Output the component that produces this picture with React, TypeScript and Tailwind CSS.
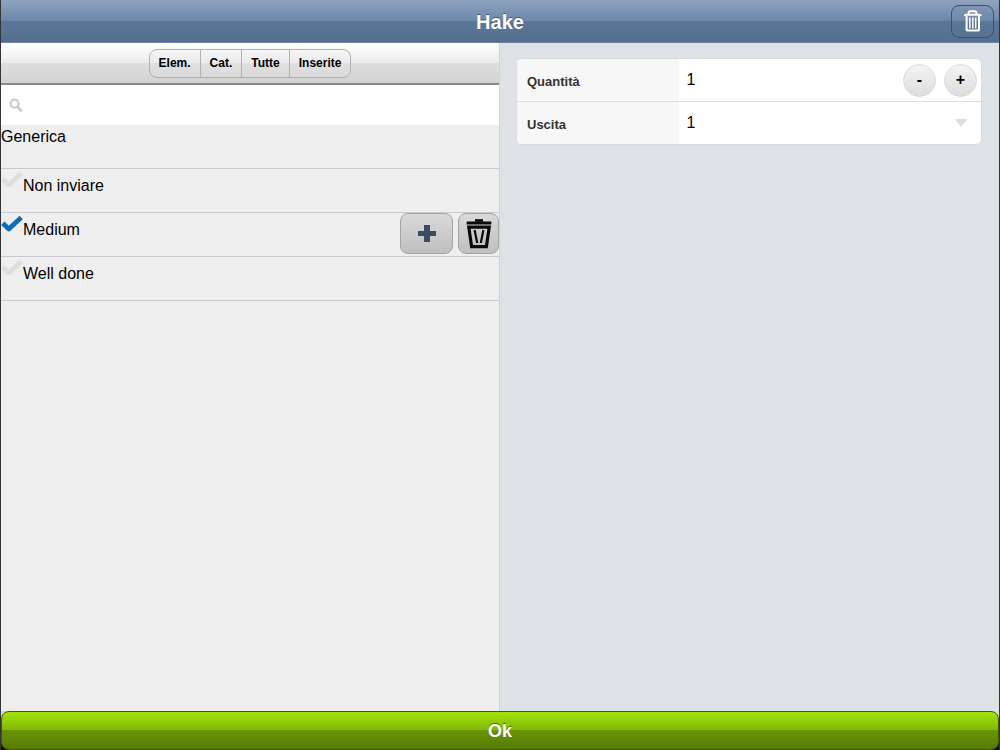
import React, { useState } from 'react';

const TABS = ['Elem.', 'Cat.', 'Tutte', 'Inserite'];
const VARIANTS = ['Non inviare', 'Medium', 'Well done'];

const CheckMark = ({ active }: { active: boolean }) => (
  <svg
    width="22"
    height="18"
    viewBox="0 0 22 18"
    className={`shrink-0 ${active ? 'text-[#0b6db7]' : 'text-[#dedede]'}`}
    aria-hidden="true"
  >
    <path d="M1.8 8.2L7.8 14L20.2 2.6" fill="none" stroke="currentColor" strokeWidth="4.8" strokeLinejoin="round" />
  </svg>
);

const HeaderTrashIcon = () => (
  <svg width="18" height="22" viewBox="0 0 18 22" fill="none" stroke="#fff" aria-hidden="true">
    <path d="M4.6 4.5V3Q4.6 1.2 6.4 1.2h4.2Q12.4 1.2 12.4 3V4.5" strokeWidth="2" />
    <path d="M0.8 6Q0.8 4.7 2.4 4.7h12.8Q16.8 4.7 16.8 6" strokeWidth="2" />
    <path d="M2.6 6v13.7Q2.6 20.6 3.5 20.6h10.6Q15 20.6 15 19.7V6" strokeWidth="2" />
    <path d="M5.9 7.4v11M8.8 7.4v11M11.7 7.4v11" strokeWidth="1.5" />
  </svg>
);

const RowTrashIcon = () => (
  <svg width="26" height="30" viewBox="0 0 26 30" fill="none" stroke="#0a0a0a" aria-hidden="true">
    <path d="M9 1.5h8" strokeWidth="2.6" />
    <path d="M0.7 4h24.6" strokeWidth="3" />
    <path d="M2.8 8.2h20.4L20.4 27.6H5.6Z" strokeWidth="3.2" />
    <path d="M8.6 11l2.6 13M17.4 11l-2.6 13" strokeWidth="2.2" />
  </svg>
);

const SearchIcon = () => (
  <svg width="14" height="15" viewBox="0 0 14 15" fill="none" stroke="#cbcbcb" aria-hidden="true">
    <circle cx="5.6" cy="5.6" r="4" strokeWidth="2.1" />
    <path d="M8.6 8.8l4.2 4.5" strokeWidth="2.6" />
  </svg>
);

const App = () => {
  const [selected, setSelected] = useState(['Medium']);
  const [quantity, setQuantity] = useState(1);

  const toggle = (name: string) => {
    setSelected(selected.includes(name) ? selected.filter((n) => n !== name) : [...selected, name]);
  };

  return (
    <div className="min-h-screen flex flex-col bg-[#dee1e6] border-x border-[#333539] font-['Liberation_Sans',Arial,sans-serif] text-black">
      {/* Title bar */}
      <header className="grid grid-cols-[1fr_auto_1fr] items-center h-[43px] px-[5px] border-b border-[#6c83a4] bg-[linear-gradient(to_bottom,#8fa3be_0%,#6c87a9_50%,#5a7799_50%,#566f8e_100%)]">
        <h1 className="col-start-2 text-xl leading-7 pt-px font-bold text-white [text-shadow:0_-1px_0_#43536b]">Hake</h1>
        <button
          aria-label="Elimina"
          className="justify-self-end flex items-center justify-center w-[43px] h-[33px] rounded-lg border border-[#3d516a] bg-[linear-gradient(to_bottom,#7f95b3_0%,#6f89aa_50%,#5a7799_50%,#59728f_100%)]"
        >
          <HeaderTrashIcon />
        </button>
      </header>

      <div className="flex flex-1">
        {/* Variants */}
        <section className="w-1/2 bg-[#eee] border-r border-[#d0d2d5]">
          <div className="flex justify-center items-center h-[42px] border-b-2 border-[#888] bg-[linear-gradient(to_bottom,#fff_0%,#ebebeb_50%,#dfdfdf_50%,#d2d2d2_100%)]">
            <div className="flex h-[29px] rounded-lg border border-[#b0b0b0] bg-[linear-gradient(to_bottom,#f4f4f4_0%,#ebebeb_50%,#e0e0e0_50%,#d9d9d9_100%)]">
              {TABS.map((tab) => (
                <button key={tab} className="px-[9px] text-xs font-bold border-r border-[#b0b0b0] last:border-r-0">
                  {tab}
                </button>
              ))}
            </div>
          </div>

          <label className="flex items-center gap-2 h-10 px-2 bg-white">
            <SearchIcon />
            <input type="search" aria-label="Cerca" className="flex-1 min-w-0 outline-none" />
          </label>

          <h2 className="h-11 border-b border-[#c8c9cf] text-base">Generica</h2>
          <ul>
            {VARIANTS.map((name) => (
              <li key={name} className="flex justify-between h-11 border-b border-[#c8c9cf]">
                <label className="relative flex flex-1 pt-0.5 text-base">
                  <input
                    type="checkbox"
                    className="sr-only"
                    checked={selected.includes(name)}
                    onChange={() => toggle(name)}
                  />
                  <CheckMark active={selected.includes(name)} />
                  <span className="pt-[3px]">{name}</span>
                </label>
                {selected.includes(name) && (
                  <div className="flex gap-[5px]">
                    <button
                      aria-label="Aggiungi"
                      className="flex items-center justify-center w-[53px] h-[41px] rounded-lg border border-[#a3a3a3] bg-linear-to-b from-[#d9d9d9] to-[#bfbfbf]"
                    >
                      <svg width="18" height="17" viewBox="0 0 18 17" aria-hidden="true">
                        <path d="M6 0h6v6h6v5h-6v6H6v-6H0V6h6Z" fill="#3a4b66" />
                      </svg>
                    </button>
                    <button
                      aria-label="Rimuovi"
                      className="flex items-center justify-center w-[41px] h-[41px] rounded-lg border border-[#a3a3a3] bg-linear-to-b from-[#d9d9d9] to-[#bfbfbf]"
                    >
                      <RowTrashIcon />
                    </button>
                  </div>
                )}
              </li>
            ))}
          </ul>
        </section>

        {/* Order details */}
        <section className="w-1/2 pt-[15px] pl-4 pr-[17px]">
          <div className="rounded-md border border-[#d9dbdf] bg-white overflow-hidden">
            <div className="flex h-[43px] border-b border-[#ddd]">
              <label htmlFor="quantity" className="w-[35%] bg-[#f7f7f7] px-2.5 pt-[13px] text-[13px] leading-5 font-bold text-[#333]">
                Quantità
              </label>
              <input
                id="quantity"
                inputMode="numeric"
                value={quantity}
                onChange={(e) => setQuantity(Number(e.target.value) || 0)}
                className="flex-1 min-w-0 px-[7px] text-base outline-none"
              />
              <div className="flex items-center gap-2 pr-1">
                <button
                  aria-label="Diminuisci"
                  onClick={() => setQuantity(Math.max(0, quantity - 1))}
                  className="size-[33px] rounded-full border border-[#d9d9d9] bg-linear-to-b from-[#f4f4f4] to-[#dcdcdc] text-base font-bold"
                >
                  -
                </button>
                <button
                  aria-label="Aumenta"
                  onClick={() => setQuantity(quantity + 1)}
                  className="size-[33px] rounded-full border border-[#d9d9d9] bg-linear-to-b from-[#f4f4f4] to-[#dcdcdc] text-base font-bold"
                >
                  +
                </button>
              </div>
            </div>
            <div className="relative flex h-[42px]">
              <label htmlFor="course" className="w-[35%] bg-[#f7f7f7] px-2.5 pt-[13px] text-[13px] leading-5 font-bold text-[#333]">
                Uscita
              </label>
              <select id="course" className="flex-1 min-w-0 px-[7px] text-base appearance-none bg-transparent outline-none">
                <option>1</option>
                <option>2</option>
                <option>3</option>
              </select>
              <svg
                width="12"
                height="8"
                viewBox="0 0 12 8"
                className="absolute right-3.5 top-[17px] pointer-events-none"
                aria-hidden="true"
              >
                <path d="M0 0h12L6 8Z" fill="#ddd" />
              </svg>
            </div>
          </div>
        </section>
      </div>

      {/* Confirm */}
      <footer className="bg-[linear-gradient(to_bottom,#d5d8dc_20%,#111_20%)]">
        <button className="block w-full h-[39px] rounded-lg border border-[#3f5a08] bg-[linear-gradient(to_bottom,#a2e306_0%,#7fb606_50%,#689406_50%,#567b03_100%)] text-lg font-bold text-white [text-shadow:0_-1px_0_#4b6b05]">
          Ok
        </button>
      </footer>
    </div>
  );
};

export default App;
